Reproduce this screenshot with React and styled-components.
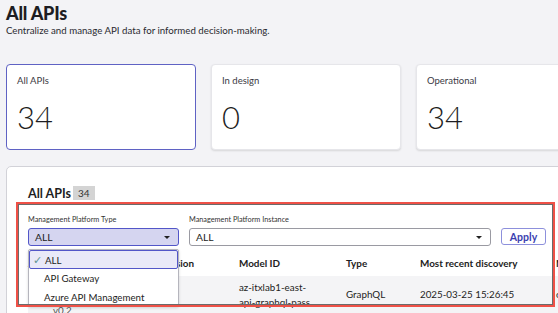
import React from "react";
import styled, { createGlobalStyle } from "styled-components";

const GlobalStyle = createGlobalStyle`
  html, body {
    margin: 0;
    padding: 0;
    background: #f3f3f6;
    font-family: Lato, "Open Sans", sans-serif;
    color: #1d1d22;
    overflow: hidden;
  }
`;

const Page = styled.div`
  width: 558px;
  height: 313px;
  padding: 2px 0 0 6px;
  box-sizing: border-box;
  overflow: hidden;
`;

const Title = styled.h1`
  margin: 0;
  font-size: 18px;
  font-weight: 900;
  line-height: 22px;
  letter-spacing: -0.2px;
`;

const Subtitle = styled.p`
  margin: 0;
  font-size: 9.7px;
  line-height: 13px;
  color: #2a2a30;
`;

const Cards = styled.div`
  display: flex;
  gap: 15px;
  margin-top: 27px;
  width: 700px;
`;

const Card = styled.div`
  flex: 0 0 190px;
  height: 86px;
  box-sizing: border-box;
  background: #fff;
  border-radius: 4px;
  padding: 10px 10px 0 10px;
  border: ${(p) => (p.$active ? "1.5px solid #5f62c4" : "1px solid #e6e6ea")};
  box-shadow: ${(p) => (p.$active ? "none" : "0 1px 2px rgba(0,0,0,0.12)")};
`;

const CardLabel = styled.div`
  font-size: 9.5px;
  line-height: 12px;
  color: #3a3a44;
`;

const CardValue = styled.div`
  margin-top: 12px;
  font-size: 31px;
  font-weight: 300;
  line-height: 36px;
`;

const Panel = styled.section`
  margin-top: 16px;
  width: 640px;
  height: 200px;
  background: #fff;
  border: 1px solid #d2d2d8;
  border-radius: 5px;
  padding: 18px 0 0 21px;
  box-sizing: border-box;
`;

const PanelHead = styled.div`
  display: flex;
  align-items: center;
  gap: 2px;
  height: 16px;
`;

const PanelTitle = styled.h2`
  margin: 0;
  font-size: 12.5px;
  font-weight: 700;
`;

const Badge = styled.span`
  background: #d4d4d4;
  color: #333;
  font-size: 10px;
  padding: 1px 5px;
  line-height: 12px;
`;

const FilterArea = styled.div`
  position: relative;
  margin-top: 14px;
`;

const FilterRow = styled.div`
  display: flex;
  align-items: flex-start;
  gap: 10px;
`;

const Field = styled.div`
  display: flex;
  flex-direction: column;
  gap: 3px;
  width: ${(p) => p.$w}px;
`;

const FieldLabel = styled.label`
  font-size: 7.3px;
  line-height: 10px;
  color: #333;
  white-space: nowrap;
`;

const Select = styled.div`
  height: 18px;
  box-sizing: border-box;
  border-radius: 3px;
  display: flex;
  align-items: center;
  justify-content: space-between;
  padding: 0 8px 0 6px;
  font-size: 10.3px;
  background: ${(p) => (p.$open ? "#d5d5f0" : "#fff")};
  border: ${(p) => (p.$open ? "1.5px solid #5256c8" : "1px solid #9a9aa2")};
`;

const Caret = styled.span`
  width: 0;
  height: 0;
  border-left: 3px solid transparent;
  border-right: 3px solid transparent;
  border-top: 3.5px solid #222;
`;

const ApplyButton = styled.button`
  margin-top: 13px;
  width: 45px;
  height: 17px;
  box-sizing: border-box;
  border: 1px solid #8d90dc;
  border-radius: 3px;
  background: #fff;
  color: #3b3eb0;
  font-family: inherit;
  font-size: 10.5px;
  font-weight: 700;
  padding: 0;
`;

const Menu = styled.ul`
  position: absolute;
  top: 34px;
  left: 0;
  width: 151px;
  margin: 0;
  padding: 0;
  list-style: none;
  background: #fff;
  border: 1px solid #b5b5bd;
  border-radius: 2px;
  box-shadow: 0 1px 3px rgba(0, 0, 0, 0.15);
  z-index: 2;
  box-sizing: border-box;
`;

const MenuItem = styled.li`
  height: ${(p) => (p.$selected ? 19 : 18.5)}px;
  box-sizing: border-box;
  display: flex;
  align-items: center;
  gap: 2px;
  font-size: 9.7px;
  padding-left: ${(p) => (p.$selected ? 3 : 15)}px;
  background: ${(p) => (p.$selected ? "#e9e9f8" : "#fff")};
  border: ${(p) => (p.$selected ? "1.5px solid #5256c8" : "none")};
  border-radius: 2px;
`;

const Check = styled.span`
  color: #5f9494;
  font-size: 10.5px;
  width: 10px;
`;

const Table = styled.div`
  margin-top: 4px;
  width: 620px;
`;

const Row = styled.div`
  display: grid;
  grid-template-columns: 133px 78px 107px 74px 136px 90px;
  align-items: ${(p) => (p.$head ? "center" : "start")};
  height: ${(p) => (p.$head ? 26 : 40)}px;
  box-sizing: border-box;
  padding-top: ${(p) => (p.$head ? 0 : 4)}px;
  background: ${(p) => (p.$head ? "#fff" : "#f4f4f6")};
  font-size: ${(p) => (p.$head ? 9.9 : 9.8)}px;
  line-height: 15px;
  font-weight: ${(p) => (p.$head ? 700 : 400)};
`;

const Cell = styled.div`
  white-space: nowrap;
  margin-top: ${(p) => (p.$mid ? 6.5 : 0)}px;
`;

const NameCell = styled(Cell)`
  padding: 7.5px 0 0 25px;
  color: #555;
`;

const Annotation = styled.div`
  position: absolute;
  top: -13px;
  left: -12px;
  width: 539px;
  height: 105px;
  box-sizing: border-box;
  border: 2.5px solid #ef5147;
  box-shadow: inset 0 0 0 1px #6b6b6b;
  pointer-events: none;
  z-index: 3;
`;

export default function App() {
  return (
    <Page>
      <GlobalStyle />
      <Title>All APIs</Title>
      <Subtitle>Centralize and manage API data for informed decision-making.</Subtitle>

      <Cards>
        <Card $active>
          <CardLabel>All APIs</CardLabel>
          <CardValue>34</CardValue>
        </Card>
        <Card>
          <CardLabel>In design</CardLabel>
          <CardValue>0</CardValue>
        </Card>
        <Card>
          <CardLabel>Operational</CardLabel>
          <CardValue>34</CardValue>
        </Card>
      </Cards>

      <Panel>
        <PanelHead>
          <PanelTitle>All APIs</PanelTitle>
          <Badge>34</Badge>
        </PanelHead>

        <FilterArea>
          <FilterRow>
            <Field $w={151}>
              <FieldLabel>Management Platform Type</FieldLabel>
              <Select $open>
                ALL
                <Caret />
              </Select>
            </Field>
            <Field $w={302}>
              <FieldLabel>Management Platform Instance</FieldLabel>
              <Select>
                ALL
                <Caret />
              </Select>
            </Field>
            <ApplyButton>Apply</ApplyButton>
          </FilterRow>

          <Menu>
            <MenuItem $selected>
              <Check>✓</Check>ALL
            </MenuItem>
            <MenuItem>API Gateway</MenuItem>
            <MenuItem>Azure API Management</MenuItem>
          </Menu>

          <Table>
            <Row $head>
              <Cell>API name</Cell>
              <Cell>Version</Cell>
              <Cell>Model ID</Cell>
              <Cell>Type</Cell>
              <Cell>Most recent discovery</Cell>
              <Cell>Management</Cell>
            </Row>
            <Row>
              <NameCell>
                api-graphql
                <br />
                v0.2
              </NameCell>
              <Cell>1.0</Cell>
              <Cell>
                az-itxlab1-east-
                <br />
                api-graphql-pass
              </Cell>
              <Cell $mid>GraphQL</Cell>
              <Cell $mid>2025-03-25 15:26:45</Cell>
              <Cell $mid>cloud</Cell>
            </Row>
          </Table>

          <Annotation />
        </FilterArea>
      </Panel>
    </Page>
  );
}
